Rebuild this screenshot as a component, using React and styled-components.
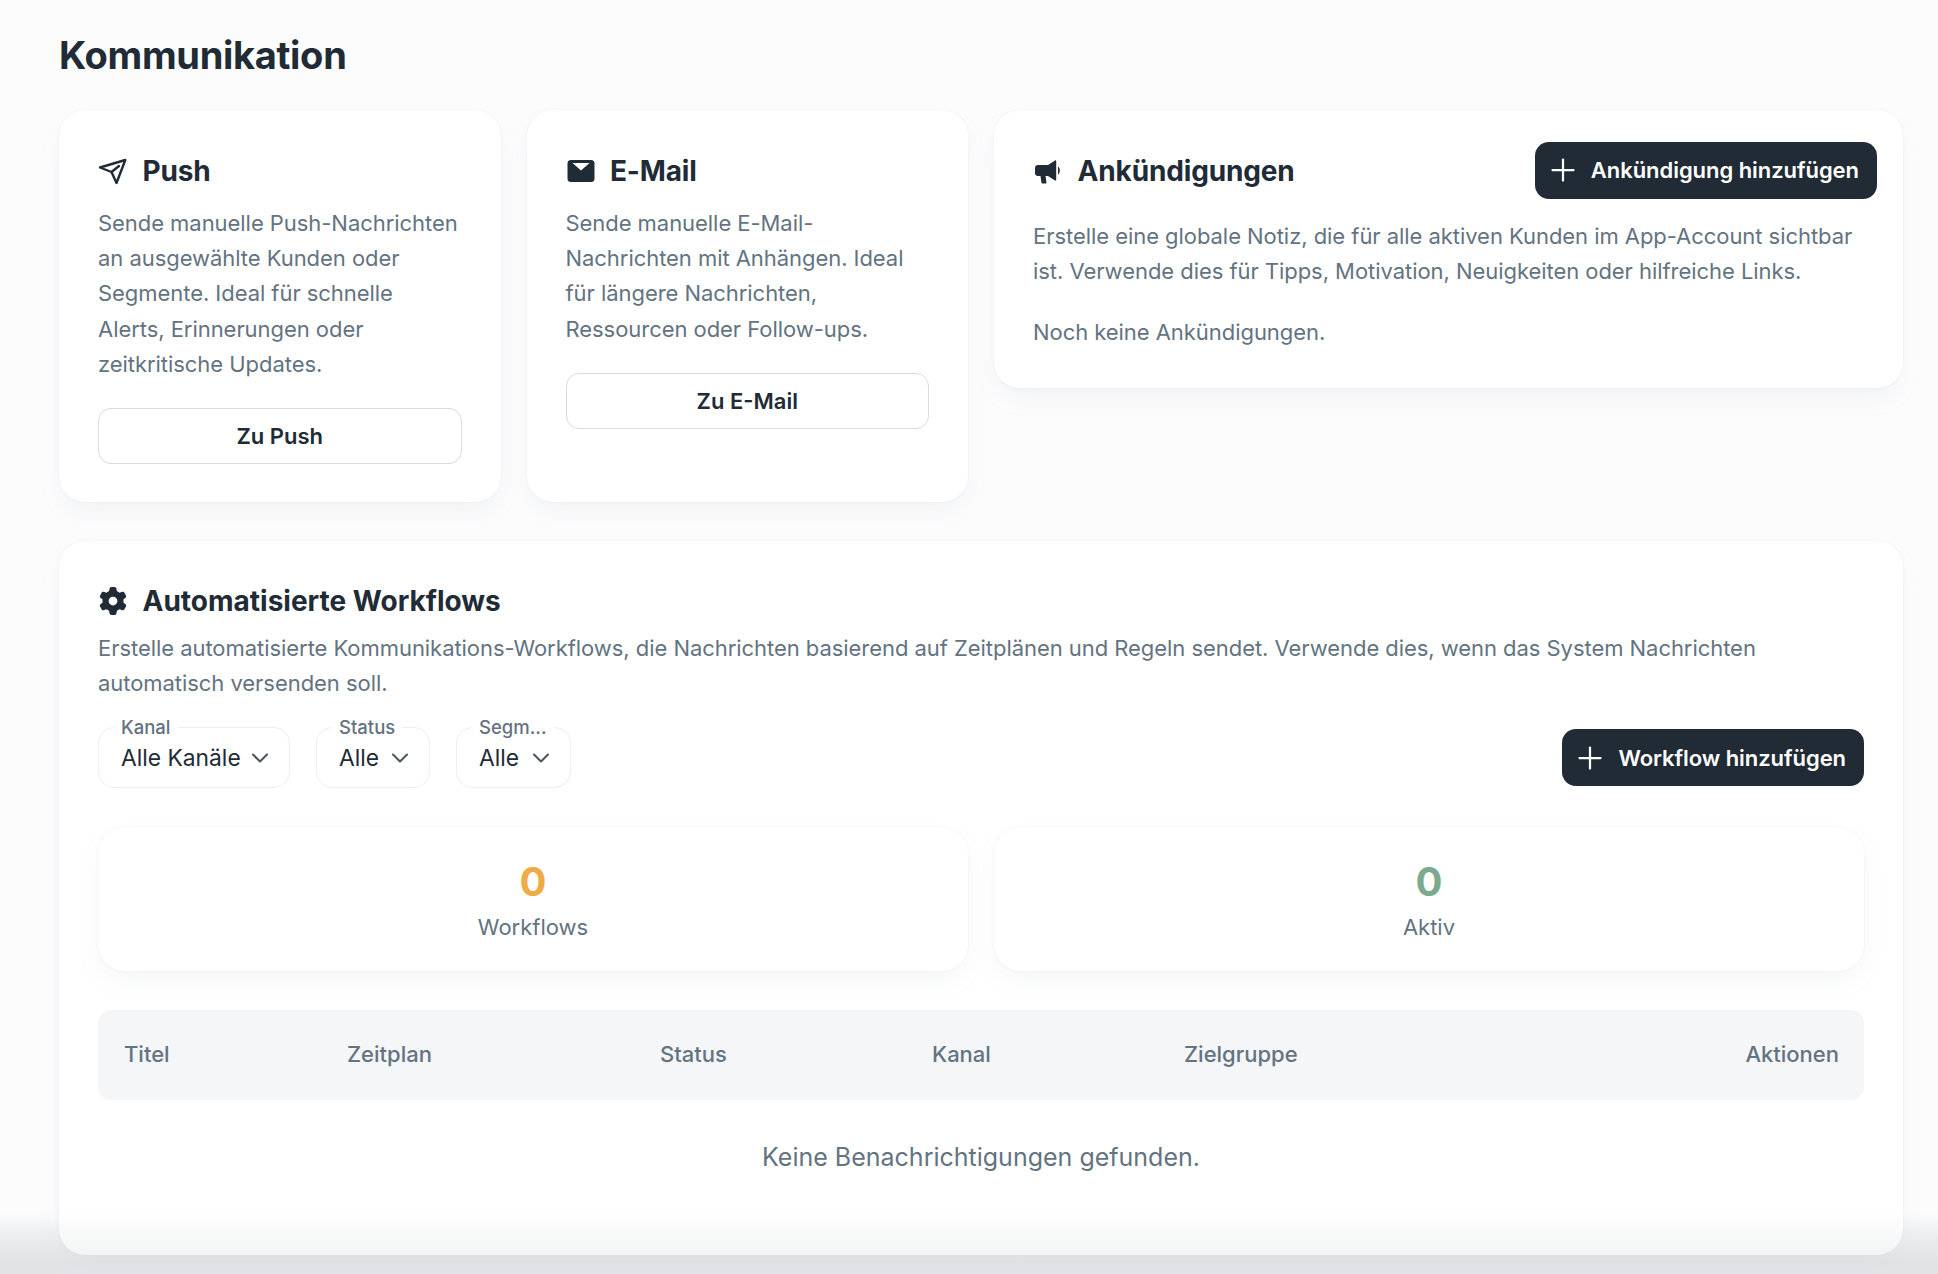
import React from 'react';
import styled, { createGlobalStyle } from 'styled-components';
import { ChevronDown, Plus } from 'lucide-react';
import { FaGear } from 'react-icons/fa6';

const GlobalStyle = createGlobalStyle`
  html, body {
    margin: 0;
    padding: 0;
    background: #fcfcfd;
    font-family: Inter, "Liberation Sans", sans-serif;
    color: #212b36;
  }
`;

const Page = styled.div`
  position: relative;
  width: 1938px;
  height: 1274px;
  overflow: hidden;
  box-sizing: border-box;
  padding: 33px 35px 0 59px;
  background: linear-gradient(to bottom, #fcfcfd 1215px, #e2e4e6 1262px);
`;

const PageTitle = styled.h1`
  margin: 0 0 32px;
  font-size: 38px;
  line-height: 45px;
  font-weight: 700;
  letter-spacing: -0.3px;
`;

const TopGrid = styled.div`
  display: grid;
  grid-template-columns: 441.5px 441.5px 1fr;
  gap: 26px;
  align-items: start;
`;

const Card = styled.section`
  box-sizing: border-box;
  background: #fff;
  border-radius: 26px;
  box-shadow: 0 0 2px rgba(145, 158, 171, 0.16), 0 12px 24px -4px rgba(145, 158, 171, 0.1);
  padding: ${p => p.$padding || '46px 39px 38px'};
  min-height: ${p => p.$minHeight || 'auto'};
`;

const CardHead = styled.div`
  display: flex;
  align-items: center;
  gap: 15.5px;
  min-height: 30px;
`;

const CardTitle = styled.h2`
  margin: 0;
  font-size: 28px;
  line-height: 30px;
  font-weight: 700;
  letter-spacing: ${p => p.$tracking || '-0.15px'};
`;

const IconSlot = styled.span`
  display: inline-flex;
  flex: none;
  width: 29px;
  height: 28px;
  align-items: center;
  justify-content: flex-end;
  color: #212b36;
`;

const Body = styled.p`
  margin: ${p => p.$margin || '20px 0 0'};
  font-size: 22px;
  line-height: 35.2px;
  color: #637381;
  letter-spacing: -0.05px;
`;

const OutlineButton = styled.button`
  display: block;
  box-sizing: border-box;
  width: 100%;
  height: 56px;
  margin-top: 26px;
  border: 1px solid #d9dce1;
  border-radius: 13px;
  background: #fff;
  font: 600 22px Inter, "Liberation Sans", sans-serif;
  color: #212b36;
`;

const DarkButton = styled.button`
  display: inline-flex;
  align-items: center;
  gap: 10px;
  box-sizing: border-box;
  height: 57px;
  padding: 0 18px 0 10px;
  border: 0;
  border-radius: 14px;
  background: #212b36;
  color: #fff;
  font: 600 22px Inter, "Liberation Sans", sans-serif;
  letter-spacing: -0.05px;
  white-space: nowrap;
`;

const NoticeHead = styled(CardHead)`
  justify-content: space-between;
  margin-right: -13px;
  margin-top: -8px;
  height: 58px;
`;

const HeadGroup = styled.div`
  display: flex;
  align-items: center;
  gap: 15.5px;
  padding-top: 1px;
`;

const WorkflowCard = styled(Card)`
  margin-top: 39px;
  padding: 45px 39px 0;
  height: 714px;
`;

const FilterRow = styled.div`
  display: flex;
  align-items: center;
  gap: 26px;
  margin-top: 26px;
`;

const Select = styled.div`
  position: relative;
  box-sizing: border-box;
  display: flex;
  align-items: center;
  justify-content: space-between;
  height: 61px;
  width: ${p => p.$width};
  padding: 0 15px 0 22px;
  border: 1px solid #eceef1;
  border-radius: 16px;
  font-size: 22.8px;
  color: #212b36;
  white-space: nowrap;
`;

const SelectLabel = styled.span`
  position: absolute;
  left: 15px;
  top: -13px;
  padding: 0 7px;
  background: #fff;
  font-size: 18.5px;
  line-height: 24px;
  font-weight: 500;
  color: #637381;
`;

const Chevron = styled(ChevronDown)`
  flex: none;
  color: #4a5662;
`;

const Spacer = styled.div`
  flex: 1;
`;

const StatGrid = styled.div`
  display: grid;
  grid-template-columns: 1fr 1fr;
  gap: 26px;
  margin-top: 39px;
`;

const StatCard = styled(Card)`
  height: 144px;
  padding: 32px 0 0;
  text-align: center;
`;

const StatValue = styled.div`
  font-size: 40px;
  line-height: 46px;
  font-weight: 700;
  color: ${p => p.$color};
`;

const StatLabel = styled.div`
  margin-top: 7px;
  font-size: 22px;
  line-height: 30px;
  color: #637381;
`;

const TableHead = styled.div`
  display: grid;
  grid-template-columns: 223px 313px 272px 252px 1fr auto;
  align-items: center;
  box-sizing: border-box;
  height: 90px;
  margin-top: 39px;
  padding: 0 25px 2px 26px;
  border-radius: 13px;
  background: #f4f6f8;
  font-size: 22px;
  font-weight: 500;
  color: #637381;
`;

const EmptyText = styled.div`
  margin-top: 40px;
  text-align: center;
  font-size: 25px;
  line-height: 34px;
  color: #637381;
`;

const BottomFade = styled.div`
  position: absolute;
  left: 0;
  right: 0;
  bottom: 0;
  height: 66px;
  background: linear-gradient(to bottom, rgba(225, 227, 230, 0), rgba(225, 227, 230, 0.55));
  pointer-events: none;
`;

const PlaneIcon = () => (
  <svg width="29" height="28" viewBox="0 0 29 28" fill="none" stroke="currentColor" strokeWidth="2.4" strokeLinejoin="round" strokeLinecap="round">
    <path d="M2 10.500 27.300 3 18.500 26 13.500 15Z" />
    <path d="M13.500 15 21 9" />
  </svg>
);

const MailIcon = () => (
  <svg width="28" height="24" viewBox="0 0 28 24">
    <path fill="currentColor" d="M4 1h20a3.500 3.500 0 0 1 3.500 3.500v15A3.500 3.500 0 0 1 24 23H4a3.500 3.500 0 0 1-3.500-3.500v-15A3.500 3.500 0 0 1 4 1Z" />
    <path fill="#fff" d="M5.500 4h17L14 11.500Z" />
  </svg>
);

const HornIcon = () => (
  <svg width="28" height="28" viewBox="0 0 28 28">
    <path fill="currentColor" d="M4 8h10l7-4.500c.6-.4 1.200 0 1.200.7v18.600c0 .7-.6 1.100-1.200.7L14 19h-2.500l1 6.200c.1.700-.4 1.300-1.100 1.300H8.500c-.6 0-1-.4-1.100-1L6.500 19H4a3 3 0 0 1-3-3v-5a3 3 0 0 1 3-3Z" />
    <path fill="currentColor" d="M24 9.500c2.400 1.200 2.400 6.800 0 8Z" />
  </svg>
);

const App = () => (
  <Page>
    <GlobalStyle />
    <PageTitle>Kommunikation</PageTitle>
    <TopGrid>
      <Card $minHeight="392px">
        <CardHead>
          <IconSlot><PlaneIcon /></IconSlot>
          <CardTitle>Push</CardTitle>
        </CardHead>
        <Body>Sende manuelle Push-Nachrichten an ausgewählte Kunden oder Segmente. Ideal für schnelle Alerts, Erinnerungen oder zeitkritische Updates.</Body>
        <OutlineButton>Zu Push</OutlineButton>
      </Card>
      <Card $minHeight="392px">
        <CardHead>
          <IconSlot><MailIcon /></IconSlot>
          <CardTitle>E-Mail</CardTitle>
        </CardHead>
        <Body>Sende manuelle E-Mail-Nachrichten mit Anhängen. Ideal für längere Nachrichten, Ressourcen oder Follow-ups.</Body>
        <OutlineButton>Zu E-Mail</OutlineButton>
      </Card>
      <Card $padding="39px 39px 30px" $minHeight="278px">
        <NoticeHead>
          <HeadGroup>
            <IconSlot><HornIcon /></IconSlot>
            <CardTitle>Ankündigungen</CardTitle>
          </HeadGroup>
          <DarkButton><Plus size={36} strokeWidth={1.5} />Ankündigung hinzufügen</DarkButton>
        </NoticeHead>
        <Body $margin="20px 0 0">Erstelle eine globale Notiz, die für alle aktiven Kunden im App-Account sichtbar ist. Verwende dies für Tipps, Motivation, Neuigkeiten oder hilfreiche Links.</Body>
        <Body $margin="26px 0 0">Noch keine Ankündigungen.</Body>
      </Card>
    </TopGrid>
    <WorkflowCard>
      <CardHead>
        <IconSlot><FaGear size={28} /></IconSlot>
        <CardTitle $tracking="0">Automatisierte Workflows</CardTitle>
      </CardHead>
      <Body $margin="15px 0 0">Erstelle automatisierte Kommunikations-Workflows, die Nachrichten basierend auf Zeitplänen und Regeln sendet. Verwende dies, wenn das System Nachrichten automatisch versenden soll.</Body>
      <FilterRow>
        <Select $width="192px">
          <SelectLabel>Kanal</SelectLabel>
          Alle Kanäle
          <Chevron size={28} strokeWidth={1.8} />
        </Select>
        <Select $width="114px">
          <SelectLabel>Status</SelectLabel>
          Alle
          <Chevron size={28} strokeWidth={1.8} />
        </Select>
        <Select $width="115px">
          <SelectLabel>Segm...</SelectLabel>
          Alle
          <Chevron size={28} strokeWidth={1.8} />
        </Select>
        <Spacer />
        <DarkButton><Plus size={36} strokeWidth={1.5} />Workflow hinzufügen</DarkButton>
      </FilterRow>
      <StatGrid>
        <StatCard>
          <StatValue $color="#efab45">0</StatValue>
          <StatLabel>Workflows</StatLabel>
        </StatCard>
        <StatCard>
          <StatValue $color="#7bab8c">0</StatValue>
          <StatLabel>Aktiv</StatLabel>
        </StatCard>
      </StatGrid>
      <TableHead>
        <span>Titel</span>
        <span>Zeitplan</span>
        <span>Status</span>
        <span>Kanal</span>
        <span>Zielgruppe</span>
        <span>Aktionen</span>
      </TableHead>
      <EmptyText>Keine Benachrichtigungen gefunden.</EmptyText>
    </WorkflowCard>
    <BottomFade />
  </Page>
);

export default App;
